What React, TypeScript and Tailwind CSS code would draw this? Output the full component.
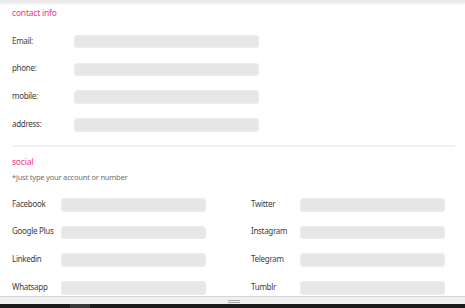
import React from "react";

const font = { fontFamily: "'Noto Sans', 'Open Sans', sans-serif" };

function Input({ w }: { w: string }) {
  return <div className={`h-[13.5px] ${w} rounded-[3px] bg-[#e7e7e8] border border-[#ececed]`} />;
}

const contact = ["Email:", "phone:", "mobile:", "address:"];
const left = ["Facebook", "Google Plus", "Linkedin", "Whatsapp"];
const right = ["Twitter", "Instagram", "Telegram", "Tumblr"];

export default function App() {
  return (
    <div className="w-[465px] h-[308px] flex flex-col bg-white overflow-hidden" style={font}>
      <div className="h-[3px] bg-[#ececec] shadow-[0_1px_2px_rgba(0,0,0,0.08)] shrink-0" />
      <div className="flex-1 overflow-hidden pl-[12px] pr-[10px]">
        <div className="mt-[3.5px] h-[12px] leading-[12px] text-[8.5px] tracking-[-0.2px] text-[#f5367a]">contact info</div>
        <div className="mt-[9.4px] flex flex-col">
          {contact.map((c) => (
            <div key={c} className="h-[27.7px] flex items-center">
              <div className="w-[62px] text-[8px] tracking-[-0.3px] text-[#3e3e3e] -mt-[2px]">{c}</div>
              <Input w="w-[185px]" />
            </div>
          ))}
        </div>
        <div className="mt-[6.3px] h-[2px] bg-[#f1f1f1] w-[443px]" />
        <div className="mt-[9px] h-[12px] leading-[12px] text-[8.5px] tracking-[-0.2px] text-[#f5367a]">social</div>
        <div className="mt-[3px] h-[12px] leading-[12px] text-[7.5px] tracking-[-0.2px] text-[#6f6f6f]">*just type your account or number</div>
        <div className="mt-[8px] flex">
          <div className="w-[239px] flex flex-col">
            {left.map((c) => (
              <div key={c} className="h-[27.7px] flex items-center">
                <div className="w-[49px] text-[8px] tracking-[-0.3px] text-[#3e3e3e] -mt-[2px]">{c}</div>
                <Input w="w-[145px]" />
              </div>
            ))}
          </div>
          <div className="flex flex-col">
            {right.map((c) => (
              <div key={c} className="h-[27.7px] flex items-center">
                <div className="w-[49px] text-[8px] tracking-[-0.3px] text-[#3e3e3e] -mt-[2px]">{c}</div>
                <Input w="w-[145px]" />
              </div>
            ))}
          </div>
        </div>
      </div>
      <div className="h-[8px] shrink-0 border-t border-[#d6d6d6] bg-[#f0f0f0] flex items-end justify-center pb-[1px]">
        <div className="w-[12px] flex flex-col gap-[1px] ml-[3px]">
          <div className="h-px bg-[#a8a8a8]" />
          <div className="h-px bg-[#a8a8a8]" />
        </div>
      </div>
      <div className="h-[4px] shrink-0 bg-[#1c1c1c] flex">
        <div className="w-[70px]" />
        <div className="w-[20px] bg-[#3a3a3a]" />
      </div>
    </div>
  );
}
